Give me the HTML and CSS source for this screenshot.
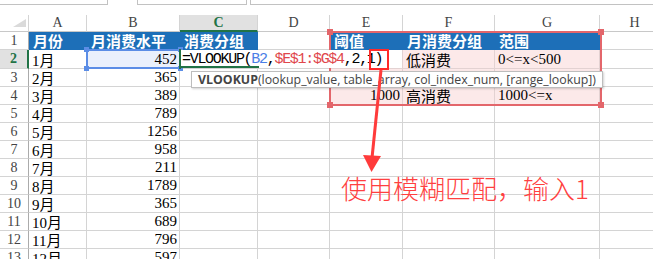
FILE: index.html
```html
<!DOCTYPE html>
<html lang="zh">
<head>
<meta charset="utf-8">
<title>VLOOKUP</title>
<link rel="stylesheet" href="styles.css">
</head>
<body>
<div class="app">
  <div class="topbar">
    <div class="box namebox"></div>
    <div class="box fxbox"></div>
    <div class="box formulabar"></div>
  </div>
  <div class="sheet">
    <div class="corner"><svg width="29" height="17" viewBox="0 0 29 17"><polygon points="13,12 26,12 26,4" fill="#dadada"/></svg></div>
    <div class="ch">A</div><div class="ch">B</div><div class="ch ch-sel">C</div><div class="ch">D</div><div class="ch">E</div><div class="ch">F</div><div class="ch">G</div><div class="ch">H</div>

    <div class="rh">1</div>
    <div class="c hd">月份</div><div class="c hd">月消费水平</div><div class="c hd">消费分组</div><div class="c"></div>
    <div class="c hd">阈值</div><div class="c hd">月消费分组</div><div class="c hd">范围</div><div class="c"></div>

    <div class="rh rh-sel">2</div>
    <div class="c">1月</div><div class="c num ref">452</div><div class="c"></div><div class="c"></div>
    <div class="c num pk">0</div><div class="c pk">低消费</div><div class="c pk">0&lt;=x&lt;500</div><div class="c"></div>

    <div class="rh">3</div>
    <div class="c">2月</div><div class="c num">365</div><div class="c"></div><div class="c"></div>
    <div class="c num pk">500</div><div class="c pk">中消费</div><div class="c pk">500&lt;=x&lt;1000</div><div class="c"></div>

    <div class="rh">4</div>
    <div class="c">3月</div><div class="c num">389</div><div class="c"></div><div class="c"></div>
    <div class="c num pk">1000</div><div class="c pk">高消费</div><div class="c pk">1000&lt;=x</div><div class="c"></div>

    <div class="rh">5</div>
    <div class="c">4月</div><div class="c num">789</div><div class="c"></div><div class="c"></div><div class="c"></div><div class="c"></div><div class="c"></div><div class="c"></div>
    <div class="rh">6</div>
    <div class="c">5月</div><div class="c num">1256</div><div class="c"></div><div class="c"></div><div class="c"></div><div class="c"></div><div class="c"></div><div class="c"></div>
    <div class="rh">7</div>
    <div class="c">6月</div><div class="c num">958</div><div class="c"></div><div class="c"></div><div class="c"></div><div class="c"></div><div class="c"></div><div class="c"></div>
    <div class="rh">8</div>
    <div class="c">7月</div><div class="c num">211</div><div class="c"></div><div class="c"></div><div class="c"></div><div class="c"></div><div class="c"></div><div class="c"></div>
    <div class="rh">9</div>
    <div class="c">8月</div><div class="c num">1789</div><div class="c"></div><div class="c"></div><div class="c"></div><div class="c"></div><div class="c"></div><div class="c"></div>
    <div class="rh">10</div>
    <div class="c">9月</div><div class="c num">365</div><div class="c"></div><div class="c"></div><div class="c"></div><div class="c"></div><div class="c"></div><div class="c"></div>
    <div class="rh">11</div>
    <div class="c">10月</div><div class="c num">689</div><div class="c"></div><div class="c"></div><div class="c"></div><div class="c"></div><div class="c"></div><div class="c"></div>
    <div class="rh">12</div>
    <div class="c">11月</div><div class="c num">796</div><div class="c"></div><div class="c"></div><div class="c"></div><div class="c"></div><div class="c"></div><div class="c"></div>
    <div class="rh">13</div>
    <div class="c">12月</div><div class="c num">597</div><div class="c"></div><div class="c"></div><div class="c"></div><div class="c"></div><div class="c"></div><div class="c"></div>
  </div>

  <!-- overlays -->
  <div class="refbox">
    <span class="hdl tl"></span><span class="hdl tr"></span><span class="hdl bl"></span><span class="hdl br"></span>
  </div>
  <div class="rangebox">
    <span class="rhdl tl"></span><span class="rhdl tr"></span><span class="rhdl bl"></span><span class="rhdl br"></span>
  </div>
  <div class="editbox"><span>=VLOOKUP(</span><span class="f-blue">B2</span><span>,</span><span class="f-red">$E$1:$G$4</span><span>,2,1)</span></div>
  <div class="active-left"></div>
  <div class="active-bottom"></div>
  <div class="tooltip"><b>VLOOKUP</b>(lookup_value, table_array, col_index_num, [range_lookup])</div>
  <div class="markbox"></div>
  <svg class="arrow" width="653" height="259" viewBox="0 0 653 259">
    <line x1="381" y1="70" x2="372" y2="158" stroke="#ff3b3b" stroke-width="3"/>
    <polygon points="363,155 381,156 371.5,172" fill="#ff3b3b"/>
  </svg>
  <div class="note">使用模糊匹配，输入1</div>
</div>
</body>
</html>
```

FILE: styles.css
```css
* { box-sizing: border-box; }
html, body { margin: 0; padding: 0; background: #fff; overflow: hidden; }
body { width: 653px; height: 259px; }
.app { position: relative; width: 653px; height: 259px; overflow: hidden; }

.topbar { display: flex; height: 15px; }
.box { height: 5px; border: 1px solid #c2c2c2; border-top: none; background: #fff; }
.namebox { width: 108px; border-left: none; }
.fxbox { width: 110px; margin-left: 29px; }
.formulabar { flex: 1; margin-left: 3px; border-right: none; }

.sheet {
  display: grid;
  grid-template-columns: 29px 58px 93px 78px 72px 73px 92px 105px 70px;
  grid-template-rows: 17px 18px 19px repeat(11, 18px);
  width: 670px;
  font-family: "Liberation Serif", "Noto Sans CJK SC", serif;
}
.corner { border-right: 1px solid #d4d4d4; border-bottom: 1px solid #c8c8c8; }
.corner svg { display: block; }
.ch {
  display: flex; align-items: center; justify-content: center;
  font-size: 14px; color: #444;
  border-right: 1px solid #d4d4d4; border-bottom: 1px solid #c8c8c8;
}
.ch-sel { background: #e1e1e1; color: #217346; font-weight: bold; border-bottom: 2px solid #217346; }
.rh {
  display: flex; align-items: center; justify-content: center;
  font-size: 14px; color: #444;
  border-right: 1px solid #ababab; border-bottom: 1px solid #d4d4d4;
}
.rh-sel { background: #e1e1e1; color: #217346; font-weight: bold; border-right: 2px solid #217346; }

.c {
  display: flex; align-items: center;
  font-size: 15px; color: #000; white-space: nowrap; overflow: hidden;
  padding: 0 3px;
  border-right: 1px solid #d4d4d4; border-bottom: 1px solid #d4d4d4;
}
.num { justify-content: flex-end; padding-right: 2px; }
.hd { background: #1d6fb8; color: #fff; font-weight: bold; border-color: #1d6fb8; padding-left: 4px; }
.pk { background: #fce9e9; border-color: #e3d2d2; }
.ref { background: #eaf0fc; }

/* overlays */
.refbox {
  position: absolute; left: 86px; top: 49px; width: 95px; height: 20px;
  border: 2px solid #5b8de6;
}
.hdl { position: absolute; width: 5px; height: 5px; background: #5b8de6; }
.tl { left: -4px; top: -4px; }
.tr { right: -4px; top: -4px; }
.bl { left: -4px; bottom: -4px; }
.br { right: -4px; bottom: -4px; }

.rangebox {
  position: absolute; left: 329px; top: 31px; width: 273px; height: 75px;
  border: 2px solid #e3666b;
}
.rhdl { position: absolute; width: 6px; height: 6px; background: #e3666b; }

.editbox {
  position: absolute; left: 181px; top: 50px; width: 221px; height: 18px;
  background: #fff;
  display: flex; align-items: center;
  padding-left: 1px;
  font-family: "Liberation Mono", monospace; font-size: 15px; letter-spacing: -1.3px;
  color: #000; white-space: pre;
}
.f-blue { color: #4a7ee6; }
.f-red { color: #e0474c; }
.active-left { position: absolute; left: 179px; top: 49px; width: 2px; height: 20px; background: #217346; }
.active-bottom { position: absolute; left: 179px; top: 66px; width: 80px; height: 2px; background: #217346; }

.tooltip {
  position: absolute; left: 191px; top: 71px; width: 412px; height: 17px;
  background: #fff; border: 1px solid #bdbdbd;
  box-shadow: 1px 1px 2px rgba(0,0,0,0.18);
  font-family: "Open Sans", "Noto Sans", sans-serif; font-size: 12.35px; color: #444;
  line-height: 15px; padding-left: 6px; white-space: nowrap;
}
.tooltip b { font-weight: bold; }

.markbox {
  position: absolute; left: 369px; top: 49px; width: 20px; height: 21px;
  border: 2.5px solid #ff2a2a;
}
.arrow { position: absolute; left: 0; top: 0; }
.note {
  position: absolute; left: 341px; top: 175px;
  font-family: "Noto Sans CJK SC", sans-serif; font-weight: 300;
  font-size: 26px; line-height: 26px; color: #ff4040; white-space: nowrap;
}
```
